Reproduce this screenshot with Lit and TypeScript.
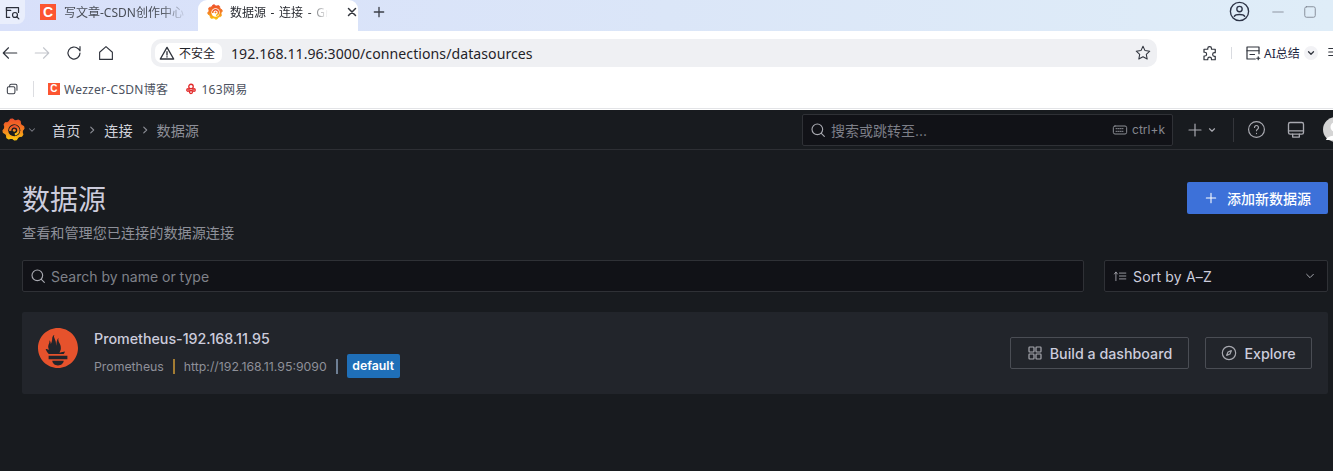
import { LitElement, html, css, svg } from "lit";
import { customElement } from "lit/decorators.js";

function burst(cx: number, cy: number, r1: number, r2: number, n: number) {
  const pts: string[] = [];
  for (let i = 0; i < n * 4; i++) {
    const a = (i / (n * 4)) * Math.PI * 2 - 0.3;
    const r = i % 4 === 0 || i % 4 === 1 ? r2 : r1;
    pts.push(`${(cx + Math.cos(a) * r).toFixed(2)},${(cy + Math.sin(a) * r).toFixed(2)}`);
  }
  return pts.join(" ");
}

const grafana = (id: string, hole: string, size: number) => html`<svg width=${size} height=${size} viewBox="0 0 24 24" style="flex:none">
  <defs><linearGradient id=${id} x1="0" y1="0" x2="0" y2="1"><stop offset="0" stop-color="#ee4f2a"/><stop offset=".55" stop-color="#f58220"/><stop offset="1" stop-color="#fbc80e"/></linearGradient></defs>
  <polygon points=${burst(12, 12, 9.4, 11, 8)} fill="url(#${id})" stroke="url(#${id})" stroke-width="1.2" stroke-linejoin="round"/>
  <circle cx="12.800" cy="12.800" r="6.300" fill=${hole}/>
  ${svg`<path d="M8.600 13.500a4.300 4.300 0 1 1 4.800 3.700" fill="none" stroke="url(#${id})" stroke-width="2.400"/>
  <circle cx="12.800" cy="12.800" r="1.500" fill="url(#${id})"/>`}
</svg>`;

const ic = (size: number, color: string, body: unknown, width = 1.5) => html`<svg width=${size} height=${size} viewBox="0 0 24 24" fill="none" stroke=${color} stroke-width=${width} stroke-linecap="round" stroke-linejoin="round" style="flex:none">${body}</svg>`;

const dark = "#2b2f3a";

@customElement("app-root")
export class AppRoot extends LitElement {
  static styles = css`
    :host { display: block; width: 1333px; height: 471px; overflow: hidden; font-family: "Inter", "Noto Sans CJK SC", sans-serif; background: #181b1f; }
    .chrome { background: #fff; font-family: "Noto Sans", "Noto Sans CJK SC", sans-serif; color: #1f2329; }
    .tabs { height: 31px; display: flex; align-items: stretch; background: linear-gradient(90deg, #d8e0fa 0%, #dbe6f8 50%, #dfedf8 100%); }
    .sidebtn { width: 25px; height: 24px; background: #e9eefc; border-radius: 0 0 8px 0; display: flex; align-items: center; justify-content: center; flex: none; }
    .tab { display: flex; align-items: center; font-size: 12px; white-space: nowrap; overflow: hidden; box-sizing: border-box; padding-bottom: 7px; flex: none; }
    .tab.inactive { width: 168px; padding-left: 15px; gap: 8px; color: #4a4f58; }
    .tab.active { width: 160px; background: #fff; border-radius: 9px 9px 0 0; padding-left: 9px; gap: 7px; color: #2a2d33; margin-left: 5px; }
    .tabname { overflow: hidden; -webkit-mask-image: linear-gradient(90deg, #000 78%, transparent); mask-image: linear-gradient(90deg, #000 78%, transparent); }
    .tabname.wide { width: 124px; }
    .tabname.short { width: 98px; word-spacing: 1.5px; }
    .plus { margin-left: 13px; display: flex; align-items: center; padding-bottom: 7px; }
    .winctl { margin-left: auto; display: flex; align-items: center; padding-bottom: 8px; }
    .c { background: #fc5531; color: #fff; font-family: "Liberation Sans", sans-serif; font-weight: 700; display: inline-flex; align-items: center; justify-content: center; flex: none; }
    .c16 { width: 16px; height: 16px; font-size: 14px; }
    .c12 { width: 12px; height: 12px; font-size: 10px; }
    .nav { height: 44px; display: flex; align-items: center; padding: 0 0 0 1px; box-sizing: border-box; }
    .navicons { display: flex; align-items: center; gap: 14px; width: 150px; flex: none; }
    .url { width: 1006px; height: 28px; background: #eff0f3; border-radius: 10px; display: flex; align-items: center; box-sizing: border-box; padding: 0 5px 0 4px; flex: none; }
    .warn { height: 20px; background: #fff; border-radius: 7px; display: flex; align-items: center; gap: 4px; padding: 0 6px 0 4px; font-size: 12px; width: 67px; box-sizing: border-box; white-space: nowrap; flex: none; }
    .addr { font-size: 14.1px; margin-left: 9px; color: #1f2329; letter-spacing: 0.06px; flex: 1; }
    .navright { display: flex; align-items: center; margin-left: 44px; flex: none; }
    .sep { width: 1px; height: 12px; background: #d9dbe0; margin: 0 12px; }
    .ai { font-size: 12px; margin-left: 2px; white-space: nowrap; color: #1d2540; }
    .chev { width: 14px; height: 14px; border-radius: 50%; background: #f2f2f5; display: flex; align-items: center; justify-content: center; margin-left: 4px; }
    .menu { margin-left: 9px; }
    .marks { height: 34px; display: flex; align-items: center; border-bottom: 1px solid #e3e4e7; box-sizing: border-box; padding: 0 0 6px 5px; font-size: 12px; color: #4c5260; }
    .bsep { width: 1px; height: 16px; background: #dcdde1; margin: 0 14px 0 14px; }
    .mark { display: flex; align-items: center; gap: 4px; margin-right: 17px; white-space: nowrap; letter-spacing: 0.3px; }
    .whitegap { height: 1px; background: #fff; }

    .topbar { height: 40px; box-sizing: border-box; border-bottom: 1px solid #2d2f34; display: flex; align-items: center; }
    .logo { display: flex; align-items: center; padding-left: 2px; width: 52px; box-sizing: border-box; gap: 2px; flex: none; }
    .crumbs { display: flex; align-items: center; font-size: 14.15px; color: #d1d3dc; gap: 7px; white-space: nowrap; }
    .crumbs .cur { color: #8e9099; }
    .search { margin-left: auto; width: 371px; height: 32px; box-sizing: border-box; border: 1px solid #2f3136; background: #111217; border-radius: 2px; display: flex; align-items: center; padding: 0 7px; gap: 5px; font-size: 14px; color: #7d7f88; flex: none; }
    .search .kbd { margin-left: auto; display: flex; align-items: center; gap: 4px; font-size: 12px; color: #85878f; }
    .tools { display: flex; align-items: center; width: 160px; padding-left: 14px; box-sizing: border-box; height: 32px; flex: none; }
    .vsep { width: 1px; height: 24px; background: #34363b; margin: 0 13px 0 16px; flex: none; }
    .gap4 { width: 4px; flex: none; }
    .gap20 { width: 20px; flex: none; }
    .avatar { margin-left: 17px; flex: none; display: flex; }
    .page { padding: 32px 5px 0 22px; color: #ccccdc; }
    .head { display: flex; justify-content: space-between; align-items: flex-start; }
    h1 { margin: 0; font-size: 28px; font-weight: 400; line-height: 36px; color: #ccccdc; }
    .sub { font-size: 14.15px; color: #8e9099; line-height: 20px; margin-top: 5px; }
    .add { width: 141px; height: 32px; background: #3d71d9; border-radius: 2px; display: flex; align-items: center; gap: 8px; padding: 0 0 0 16px; box-sizing: border-box; color: #fff; font-weight: 500; font-size: 14px; }
    .filters { display: flex; gap: 20px; margin-top: 17px; }
    .input { height: 32px; box-sizing: border-box; background: #111217; border: 1px solid #2f3136; border-radius: 2px; display: flex; align-items: center; font-size: 14px; padding: 0 8px; }
    .input.q { width: 1062px; gap: 5px; color: #7f8189; padding-left: 7px; }
    .input.s { width: 224px; color: #ccccdc; gap: 6px; letter-spacing: 0.18px; }
    .input.s .down { margin-left: auto; display: flex; margin-right: 4px; }
    .card { margin-top: 20px; height: 82px; background: #22252b; border-radius: 2px; display: flex; align-items: center; padding: 0 16px; box-sizing: border-box; }
    .plogo { flex: none; align-self: flex-start; margin-top: 16px; }
    .info { margin-left: 16px; display: flex; flex-direction: column; gap: 4px; }
    .name { font-size: 14.25px; font-weight: 500; color: #ccccdc; line-height: 22px; }
    .meta { display: flex; align-items: center; font-size: 12.3px; color: #8e9099; height: 24px; }
    .bar { width: 2px; height: 15px; margin: 0 9px; flex: none; }
    .gold { background: #a37c33; }
    .slate { background: #6e7f94; }
    .tag { background: #1f6fb8; color: #fff; font-weight: 600; font-size: 12.25px; border-radius: 2px; height: 24px; line-height: 23px; box-sizing: border-box; width: 53px; text-align: center; }
    .btns { margin-left: auto; display: flex; gap: 16px; }
    .btn { height: 32px; box-sizing: border-box; border: 1px solid #4a4d54; border-radius: 2px; display: flex; align-items: center; justify-content: center; gap: 7px; font-size: 14.25px; font-weight: 500; color: #ccccdc; white-space: nowrap; }
    .btn.b { width: 179px; }
    .btn.e { width: 107px; }
  `;

  render() {
    const g = "#a8a9b0";
    return html`
      <div class="chrome">
        <div class="tabs">
          <div class="sidebtn">${ic(17, dark, svg`<path d="M8 19H3.500V5h17v7"/><path d="M3.500 5v4h6"/><circle cx="15.500" cy="15.500" r="3.500"/><path d="M18 18l3 3"/>`, 1.7)}</div>
          <div class="tab inactive"><span class="c c16">C</span><span class="tabname wide">写文章-CSDN创作中心</span></div>
          <div class="tab active">${grafana("g1", "#ffffff", 16)}<span class="tabname short">数据源 - 连接 - Grafana</span><div style="width:4px"></div>${ic(12, "#33363d", svg`<path d="M5 5l14 14M19 5L5 19"/>`, 3)}</div>
          <div class="plus">${ic(16, "#3b3f48", svg`<path d="M12 5v14M5 12h14"/>`, 2)}</div>
          <div class="winctl">
            ${ic(23, "#2c3346", svg`<circle cx="12" cy="12" r="9.500"/><circle cx="12" cy="9.500" r="2.800"/><path d="M6.500 17c1.500-2.500 9.500-2.500 11 0"/>`, 1.4)}
            <div style="width:20px"></div>
            ${ic(14, "#7d8390", svg`<path d="M3 12h18"/>`, 1.4)}
            <div style="width:18px"></div>
            ${ic(14, "#7d8390", svg`<rect x="3" y="3" width="18" height="18" rx="3"/>`, 1.5)}
            <div style="width:16px"></div>
          </div>
        </div>
        <div class="nav">
          <div class="navicons">
            ${ic(18, "#30343d", svg`<path d="M21 12H3M10 5l-7 7 7 7"/>`, 1.5)}
            ${ic(18, "#c3c6cc", svg`<path d="M3 12h18M14 5l7 7-7 7"/>`, 1.5)}
            ${ic(18, "#30343d", svg`<path d="M20 12a8 8 0 1 1-2.400-5.700L20 9V3.500"/>`, 1.6)}
            ${ic(18, "#30343d", svg`<path d="M3.500 11L12 3.500l8.500 7.500v9.500h-17z"/>`, 1.5)}
          </div>
          <div class="url">
            <div class="warn">${ic(16, "#30343d", svg`<path d="M12 3.500L22 21H2z"/><path d="M12 10v5M12 17.500v.5"/>`, 2)}不安全</div>
            <span class="addr">192.168.11.96:3000/connections/datasources</span>
            ${ic(18, "#30343d", svg`<path d="M12 3l2.700 5.800 6.300.8-4.600 4.300 1.200 6.200L12 17l-5.600 3.100 1.200-6.200L3 9.600l6.300-.8z"/>`, 1.4)}
          </div>
          <div class="navright">
            ${ic(18, "#30343d", svg`<path d="M9 6a2.500 2.500 0 0 1 5 0v1h5v4.500h-1a2.500 2.500 0 0 0 0 5h1V21h-5v-1a2.500 2.500 0 0 0-5 0v1H4v-5h1a2.500 2.500 0 0 0 0-5H4V7h5z"/>`, 1.6)}
            <div class="sep"></div>
            ${ic(18, "#30343d", svg`<path d="M20 13V4H4v16h11"/><path d="M4 9h16M8 14h6"/><path d="M19 17v4M17 19h4"/>`, 1.6)}
            <span class="ai">AI总结</span>
            <div class="chev">${ic(10, "#30343d", svg`<path d="M6 9l6 6 6-6"/>`, 3)}</div>
            <div class="menu">${ic(14, "#30343d", svg`<path d="M3 6h18M3 12h18M3 18h18"/>`, 2)}</div>
          </div>
        </div>
        <div class="marks">
          ${ic(14, "#3a3e47", svg`<rect x="4" y="8" width="13" height="12" rx="2.500"/><path d="M8 8V6.500A2.500 2.500 0 0 1 10.500 4H18a2.500 2.500 0 0 1 2.500 2.500V14"/>`, 1.8)}
          <div class="bsep"></div>
          <div class="mark"><span class="c c12">C</span>Wezzer-CSDN博客</div>
          <div class="mark">${ic(12, "#e22a2a", svg`<circle cx="12" cy="7" r="4.500"/><circle cx="6" cy="14" r="2.500"/><circle cx="18" cy="14" r="2.500"/><circle cx="12" cy="18" r="3"/>`, 2.6)}163网易</div>
        </div>
        <div class="whitegap"></div>
      </div>

      <div class="topbar">
        <div class="logo">${grafana("g2", "#181b1f", 23)}${ic(10, "#7b7d85", svg`<path d="M6 9l6 6 6-6"/>`, 2.5)}</div>
        <div class="crumbs"><span>首页</span>${ic(10, "#8a8c94", svg`<path d="M9 5l7 7-7 7"/>`, 2.8)}<span>连接</span>${ic(10, "#8a8c94", svg`<path d="M9 5l7 7-7 7"/>`, 2.8)}<span class="cur">数据源</span></div>
        <div class="search">
          ${ic(16, g, svg`<circle cx="11" cy="11" r="8"/><path d="M17 17l4.500 4.500"/>`, 1.7)}
          <span>搜索或跳转至...</span>
          <span class="kbd">${ic(16, "#8b8d94", svg`<rect x="2" y="6" width="20" height="12" rx="2.500"/><path d="M6 10h12M6 14h12" stroke-dasharray="1.500 1.500"/>`, 1.5)}ctrl+k</span>
        </div>
        <div class="tools">
          ${ic(16, g, svg`<path d="M12 3v18M3 12h18"/>`, 1.8)}
          <div class="gap4"></div>
          ${ic(10, g, svg`<path d="M6 9l6 6 6-6"/>`, 2.8)}
          <div class="vsep"></div>
          ${ic(19, g, svg`<circle cx="12" cy="12" r="10"/><path d="M9.500 9.500a2.500 2.500 0 1 1 3.800 2.100c-.9.600-1.300 1-1.300 2M12 17v.2"/>`, 1.5)}
          <div class="gap20"></div>
          ${ic(20, g, svg`<rect x="3" y="3" width="18" height="14" rx="2"/><path d="M3 13h18M8 17v3.500h8V17"/>`, 1.6)}
          <span class="avatar"><svg width="25" height="25" viewBox="0 0 25 25"><circle cx="12.500" cy="12.500" r="12.500" fill="#d4d4d4"/><circle cx="12.500" cy="10" r="5" fill="#fff"/><path d="M3 23c1-6 18-6 19 0z" fill="#fff"/></svg></span>
        </div>
      </div>

      <div class="page">
        <div class="head">
          <div>
            <h1>数据源</h1>
            <div class="sub">查看和管理您已连接的数据源连接</div>
          </div>
          <div class="add">${ic(16, "#fff", svg`<path d="M12 5v14M5 12h14"/>`, 1.6)}添加新数据源</div>
        </div>
        <div class="filters">
          <div class="input q">${ic(16, g, svg`<circle cx="11" cy="11" r="8"/><path d="M17 17l4.500 4.500"/>`, 1.7)}<span>Search by name or type</span></div>
          <div class="input s">
            ${ic(14, g, svg`<path d="M5 20V6M2.500 8.500L5 5l2.500 3.500M11 7h11M11 12h11M11 17h11"/>`, 1.5)}
            <span>Sort by A–Z</span>
            <span class="down">${ic(10, g, svg`<path d="M4 8l8 8 8-8"/>`, 2.4)}</span>
          </div>
        </div>
        <div class="card">
          <svg class="plogo" width="40" height="40" viewBox="0 0 24 24"><path fill="#e6522c" d="M12 0C5.370 0 0 5.370 0 12s5.370 12 12 12 12-5.370 12-12S18.630 0 12 0zm0 22.460c-1.890 0-3.410-1.260-3.410-2.810h6.820c0 1.550-1.530 2.810-3.410 2.810zm5.630-3.740H6.370v-2.040h11.260v2.040zm-.04-3.100H6.400c-.04-.04-.08-.09-.11-.13-1.150-1.400-1.420-2.130-1.680-2.870 0 0 .84.170 1.430.3 0 0 .3.070.76.160-.44-.52-.7-1.170-.7-1.840 0-1.470 1.130-2.760.72-3.800.4.030.82.840.85 2.100.6-.83.850-2.340.85-3.270 0-.96.63-2.080 1.270-2.120-.57.940.15 1.750.78 3.740.24.750.2 2 .38 2.800.06-1.660.35-4.070 1.400-4.900-.46 1.050.07 2.500.43 3.130.58 1.010.93 1.780.93 3.230 0 .97-.36 1.880-.96 2.600.69-.13 1.160-.25 1.160-.25l2.240-.44s-.33 1.330-1.580 2.620z"/></svg>
          <div class="info">
            <div class="name">Prometheus-192.168.11.95</div>
            <div class="meta">
              <span>Prometheus</span><span class="bar gold"></span>
              <span>http://192.168.11.95:9090</span><span class="bar slate"></span>
              <span class="tag">default</span>
            </div>
          </div>
          <div class="btns">
            <div class="btn b">${ic(16, g, svg`<rect x="3" y="3" width="7.500" height="7.500" rx="1"/><rect x="13.500" y="3" width="7.500" height="7.500" rx="1"/><rect x="3" y="13.500" width="7.500" height="7.500" rx="1"/><rect x="13.500" y="13.500" width="7.500" height="7.500" rx="1"/>`, 1.8)}Build a dashboard</div>
            <div class="btn e">${ic(16, g, svg`<circle cx="12" cy="12" r="10"/><path d="M15.500 8.500l-2 5-5 2 2-5z"/>`, 1.8)}Explore</div>
          </div>
        </div>
      </div>
    `;
  }
}
